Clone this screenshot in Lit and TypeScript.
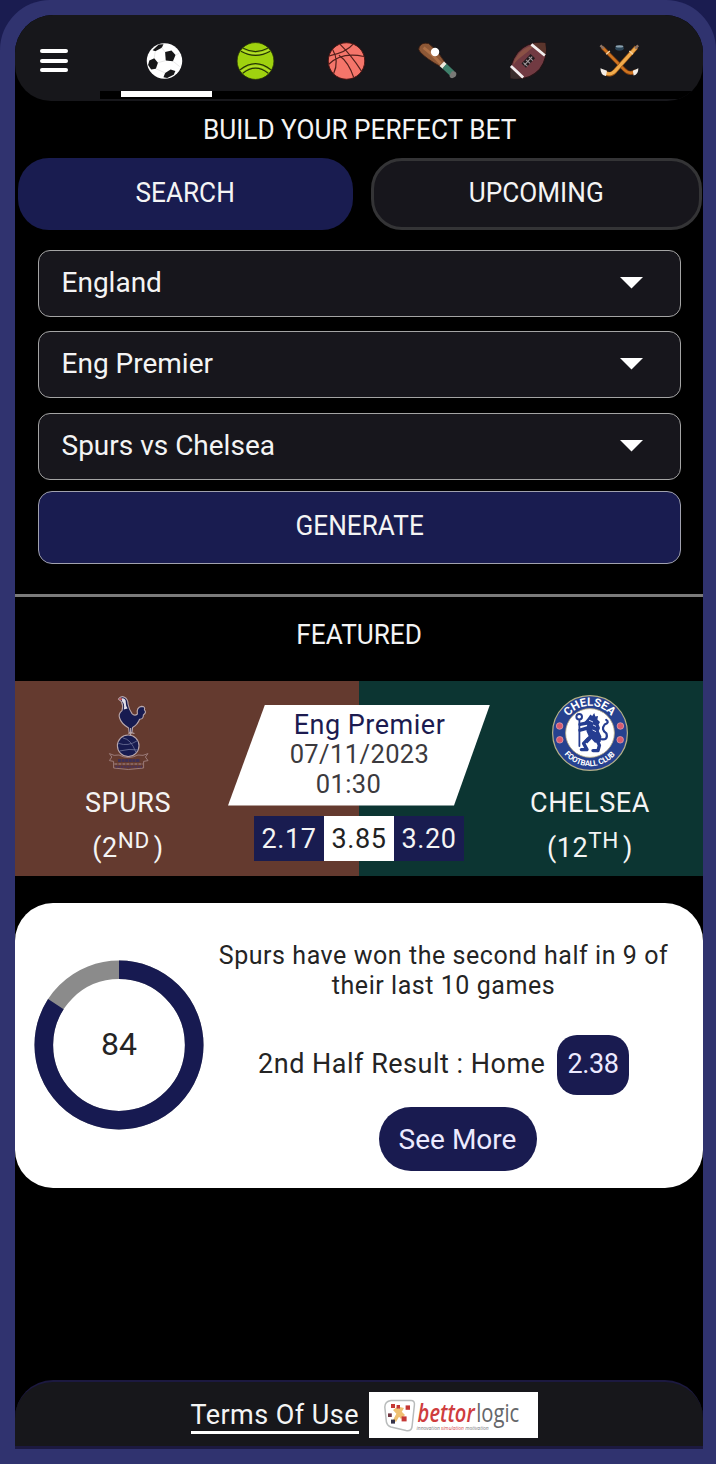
import { LitElement, html, css, svg } from "lit";
import { customElement, property } from "lit/decorators.js";

const soccer = svg`
  <circle cx="20" cy="20" r="17.3" fill="#fff"/>
  <g fill="#161618">
    <path d="M20.6 11.2 26.8 9.8 30.8 14.2 28.2 20.2 21.2 19.6Z"/>
    <path d="M5.2 19.6 10 17.2 13.6 21.6 11.6 27.6 7 28.4 4 24Z"/>
    <path d="M20.6 31.6 26 28.2 30.6 29.8 29 33.4 22.6 36.6 19 35.8Z"/>
    <path d="M8.4 9.4 14.4 4 19 3.6 17.4 7 11 10.4Z"/>
  </g>
  <g stroke="#e0e0e0" stroke-width=".7" fill="none">
    <path d="M21.2 19.6 13.6 21.6M28.2 20.2l6.6 5.2M20.6 11.2l-3.2-4.2M10 17.2l1-6.8M11.6 27.6l9 4M30.8 14.2l3.4-1.6"/>
  </g>`;

const tennis = svg`
  <circle cx="20" cy="20" r="18" fill="#9fd20f" stroke="#26300a" stroke-width=".8"/>
  <g fill="none" stroke="#243208" stroke-width="1.1">
    <path d="M5.8 10.4Q20 18.6 34.4 10.4M8 7.6Q20 14 32 7.6"/>
    <path d="M5 28.6Q20 16.6 35 28.6M7.6 32Q20 22 32.4 32"/>
  </g>
  <path d="M7 9Q20 16.4 33.2 9M6.2 30.2Q20 19.4 33.8 30.2" fill="none" stroke="#b9e038" stroke-width="1"/>`;

const basketball = svg`
  <circle cx="20" cy="20" r="17.8" fill="#f5756a" stroke="#4d1512" stroke-width=".9"/>
  <g fill="none" stroke="#54201c" stroke-width="1.2">
    <path d="M13.6 3.6Q25 15 34.6 29.8M3.2 15Q20 11.6 26.4 3.6"/>
    <path d="M2.4 23.4Q15 10.6 37 15.6M6.6 9Q13 20 7.4 32.4"/>
    <path d="M12.6 14.4Q22 21 27 36"/>
  </g>`;

const baseball = svg`
  <path d="M2.2 6.4Q4.4 1.4 11.4 3Q19.4 9 27 20.8L22.8 25.4Q9.4 18 3.2 11.4Q.8 8.8 2.2 6.4Z" fill="#8e5836" stroke="#3a1e12" stroke-width=".8"/>
  <path d="M6.4 7Q14.4 13 23 22.4" stroke="#ad6f45" stroke-width="2.8" fill="none"/>
  <path d="M26.4 20.4 29 23 25 27.6 22 24.8Z" fill="#efe9dc"/>
  <path d="M28.8 22.8 36.6 30 32.6 34.6 24.8 27.4Z" fill="#3f806b"/>
  <path d="M34.2 30Q38.4 29.4 38.4 32.8T34.2 36.8Q31 36 32 33.4Z" fill="#797976"/>
  <circle cx="17.6" cy="11.2" r="4.1" fill="#fff"/>`;

const football = svg`
  <path d="M2.6 36.8Q.8 22.6 9.4 11.6Q19.6.2 36.4 2.4Q39.4 17 30.8 28.2Q20 39.8 2.6 36.8Z" fill="#713a42" stroke="#231415" stroke-width="1"/>
  <path d="M7.6 17Q14 6 26 4.6Q22 9 14 15T5.6 24Q5 21 7.6 17Z" fill="#8a5145"/>
  <path d="M24.6 3.2Q30 1.6 36.4 2.4Q37.6 8.6 36.6 13.6Z" fill="#5a352c"/>
  <path d="M2.6 36.8Q2 31 2.6 26.4L13 36.9Q8 37.8 2.6 36.8Z" fill="#3a2d2c"/>
  <path d="M22.8 3.8 36 14.6M2.8 24.8 14.8 36" stroke="#f2eeee" stroke-width="2.7"/>
  <path d="M15.4 24.6 24.2 15.2" stroke="#211a1d" stroke-width="6"/>
  <path d="M16 24 23.6 15.8M15 21.6l4 3.6M17.6 18.8l4 3.6M20.2 16l4 3.6" stroke="#a69da0" stroke-width="1"/>`;

const hockey = svg`
  <path d="M3 6.4 25 28.6Q29.6 34.4 36 29.6" fill="none" stroke="#7d3e10" stroke-width="3.8"/>
  <path d="M4 7.4 25 28.8Q29.6 33.4 35 30.4" fill="none" stroke="#cf7420" stroke-width="2.4"/>
  <path d="M36.6 6.4 16.4 29Q11.4 36 4 30.4" fill="none" stroke="#995313" stroke-width="4.4"/>
  <path d="M36 7.2 16 29.4Q11 34.8 5 31" fill="none" stroke="#f0ab4c" stroke-width="3"/>
  <path d="M1.4 27 7.8 29.4 6.8 34.6Q1.4 33.8 1.4 27ZM38.4 27 33 29.4 33.8 34.2Q38.4 33.2 38.4 27Z" fill="#f3ede6"/>
  <path d="M1.4 4.8 4.6 8M38.2 4.8 35.2 8" stroke="#8d7364" stroke-width="2.4"/>
  <path d="M7 13.4 10.6 10.2M33.2 13.4 29.6 10.2" stroke="#f4d3a5" stroke-width="1.3"/>
  <ellipse cx="20" cy="7.6" rx="4.2" ry="2.4" fill="#2c4557"/>
  <ellipse cx="20" cy="5.8" rx="3.8" ry="1.1" fill="#8ba2b0"/>`;

const sports = [soccer, tennis, basketball, baseball, football, hockey];

const spursCrest = svg`
  <svg class="crest" viewBox="2 -1 80 80">
    <g stroke="#b9a7ab" stroke-width="1.1" stroke-linejoin="round">
      <path fill="#171b50" d="M32.4 5Q35 1.6 38.4 3.2Q42 4.8 42 10Q43 15.4 46 19.6Q48.6 22.4 51.4 20Q50.2 13.6 55.4 12.4Q59.6 12.4 58.4 15.8Q61 18.4 57.4 21Q57.4 25.4 53.6 25.2Q51.6 30.6 46.6 33.4L45.8 39H43.2L42.6 34Q35.2 29.6 33.6 24Q32 20 36 16.6Q37.6 12 35.4 7.6Z"/>
      <path d="M44.6 34V41.4M42.4 39.4Q45 38 48.4 39.4" fill="none"/>
      <circle cx="42.2" cy="51.8" r="10.8" fill="#171b50"/>
    </g>
    <path d="M32.2 5.2 35.4 3.4 36.4 6.6Z" fill="#c95a5c"/>
    <path d="M36 4.2Q40.2 4.4 39.8 8.4Q39.8 12 41.6 14.6L37.8 15.4Q39 9.8 36 7.2Z" fill="#e2dfe8"/>
    <path d="M32.6 49.4Q42 52.8 51.6 46.6M33.6 57Q43 54.4 52.4 56M37 44Q45 45 50 58.6" stroke="#6f7399" stroke-width=".8" fill="none"/>
    <g fill="none" stroke="#9b7a78" stroke-width="1">
      <path d="M23.4 59.6Q28 62.4 33 61Q42.4 66 52 61Q57 62.4 62 59.6L59.4 63 62 66.6L57.6 67.4V74Q42 77 27.6 74V67.4L23.4 66.6 25.8 63Z"/>
      <path d="M32 66.6H54" stroke="#3e3056" stroke-width="3" stroke-dasharray="3 .6"/>
      <path d="M28.4 70H57" stroke="#a98b8b" stroke-width="1.2" stroke-dasharray="3 1"/>
      <path d="M29.4 72.8H56" stroke="#4b3257" stroke-width="2" stroke-dasharray="2 .8"/>
    </g>
  </svg>`;

const chelseaCrest = svg`
  <svg class="crest" viewBox="0 0 80 80">
    <defs>
      <path id="upper" d="M14.3 47.6A26.9 26.9 0 1 1 65.7 47.6"/>
      <path id="lower" d="M7.7 47.6A33.2 33.2 0 0 0 72.3 47.6"/>
    </defs>
    <circle cx="40" cy="40" r="37.4" fill="#26418f" stroke="#b6b188" stroke-width="1.2"/>
    <circle cx="40" cy="40" r="24.4" fill="#fff" stroke="#b6a982" stroke-width=".8"/>
    <text class="badge big"><textPath href="#upper" startOffset="50%" text-anchor="middle" textLength="50">CHELSEA</textPath></text>
    <text class="badge small"><textPath href="#lower" startOffset="50%" text-anchor="middle" textLength="58">FOOTBALL CLUB</textPath></text>
    <g fill="#d65b70" stroke="#e6a5ae" stroke-width=".7">
      <circle cx="9.6" cy="33" r="3.3"/><circle cx="9.8" cy="46.8" r="3.3"/>
      <circle cx="70.4" cy="33" r="3.3"/><circle cx="70.2" cy="46.8" r="3.3"/>
    </g>
    <g stroke="#253d91" fill="none" stroke-linecap="round" stroke-linejoin="round">
      <circle cx="29.2" cy="23.8" r="2.8" stroke-width="2"/>
      <path d="M29.4 27V53" stroke-width="1.8"/>
      <path d="M37 30 30 31.4M37.4 35 30 37.2M38 46 33.6 50.4 37 56.6H31.4M47 47 49.4 52.4 48 57.6H43" stroke-width="3.4"/>
      <path d="M49.6 46Q58.8 48 56.4 40.4Q50.6 36.4 54.6 31.6Q60 29.4 56.2 26.8" stroke-width="2.2"/>
    </g>
    <path fill="#253d91" d="M38 25 40.4 21.4 42.2 23 44.2 20 45.4 23.4 48 23 47.4 26.4 50 29 48.6 31.4 50 35 48.8 38 51.4 43.6 50.6 49 45 49.8 41.6 46 37.2 50.6 34.6 47.4 38.6 43 36.4 38 37.2 31.6 34.4 29.2Z"/>
    <path d="M39 27.2 43 29M43 32l3 1.4M42.6 37l3.4 1.6" stroke="#d8def4" stroke-width="1"/>
  </svg>`;

const logo = svg`
  <svg class="logo" viewBox="0 0 169 46">
    <path d="M22 8.6H42Q46 8.6 45.4 13L43 35Q42 39.6 37 38.6L22 35Q18.4 34 17.4 30L15.8 15Q16 9.6 22 8.6Z" fill="#fff" stroke="#b9bcbc" stroke-width="1.5"/>
    <path d="M24 18l4-3 8 8-4 4ZM31 15l4 1-8 14-3-2Z" fill="#efc071"/>
    <g fill="#c43835">
      <rect x="22" y="12" width="4" height="4"/><rect x="27.6" y="13" width="3.4" height="3.6"/>
      <rect x="36.6" y="13.4" width="4.4" height="4.4"/><rect x="32.6" y="24.4" width="5" height="5"/>
    </g>
    <rect x="19" y="21.4" width="3.8" height="3.6" fill="#743742"/>
    <rect x="22" y="27.6" width="4" height="4" fill="#353348"/>
    <text class="bettor" x="48.6" y="30" textLength="57" lengthAdjust="spacingAndGlyphs">bettor</text>
    <text class="logic" x="107.2" y="30" textLength="43" lengthAdjust="spacingAndGlyphs">logic</text>
    <text class="tag" x="47.6" y="37.6" textLength="72" lengthAdjust="spacingAndGlyphs">innovation <tspan fill="#d4494b">simulation</tspan> motivation</text>
  </svg>`;

@customElement("select-box")
class SelectBox extends LitElement {
  @property() value = "";

  static styles = css`
    :host {
      display: flex;
      align-items: center;
      justify-content: space-between;
      box-sizing: border-box;
      height: 67px;
      padding: 0 37px 1px 22.5px;
      border: 1.5px solid #a4a4a4;
      border-radius: 12px;
      background: #17161c;
      color: #f4f4f4;
      font-size: 28px;
      line-height: 34px;
    }
    .arrow {
      width: 23px;
      height: 12px;
      fill: #fff;
    }
  `;

  render() {
    return html`<span>${this.value}</span>
      <svg class="arrow" viewBox="0 0 23 12"><path d="M0 0H23L11.5 11.6Z" /></svg>`;
  }
}

@customElement("app-root")
class AppRoot extends LitElement {
  static styles = css`
    :host {
      display: block;
      height: 1464px;
      background: #1a1c50;
      font-family: Roboto, "Liberation Sans", sans-serif;
      color: #f4f4f4;
    }
    * { box-sizing: border-box; }
    svg { display: block; }
    .phone {
      height: 1464px;
      padding: 15px 13px 15px 15px;
      border-radius: 50px 50px 0 0;
      background: #30336f;
    }
    .screen {
      display: flex;
      flex-direction: column;
      height: 1434px;
      border-radius: 38px 38px 0 0;
      background: #000;
    }
    .head {
      position: relative;
      display: flex;
      height: 86px;
      padding: 25px 0 0 25px;
      border-radius: 38px 38px 36px 36px;
      background: #17171b;
      overflow: hidden;
    }
    .menu {
      display: flex;
      flex-direction: column;
      gap: 5.5px;
      padding-top: 9px;
      margin-right: 54px;
    }
    .menu span {
      width: 28px;
      height: 4px;
      border-radius: 2px;
      background: #fff;
    }
    .sports { display: flex; margin-left: -1px; }
    .sport {
      display: flex;
      justify-content: center;
      width: 91px;
    }
    .sport svg { width: 41px; height: 41px; transform: translate(-2px, 0.5px); }
    .track {
      position: absolute;
      left: 85px;
      right: 0;
      bottom: 2.5px;
      height: 7.5px;
      background: #000;
    }
    .active {
      position: absolute;
      left: 106px;
      bottom: 4px;
      width: 91px;
      height: 6px;
      background: #fff;
    }
    .title {
      height: 57px;
      padding: 12px 0 0 1px;
      text-align: center;
    }
    .caps {
      display: inline-block;
      font-size: 28px;
      line-height: 34px;
      transform: scaleX(0.935);
    }
    .tabs {
      display: grid;
      grid-template-columns: 335px 331px;
      gap: 18px;
      padding: 0 1px 0 3px;
    }
    .tab {
      height: 72px;
      padding-top: 18px;
      border-radius: 31px;
      text-align: center;
    }
    .tab.on { background: #191c50; }
    .tab.off {
      padding-top: 15px;
      border: 3px solid #343436;
      background: #17161c;
    }
    .form {
      display: flex;
      flex-direction: column;
      gap: 14.5px;
      padding: 19.5px 22px 0 23px;
    }
    .generate {
      height: 73px;
      margin-top: -3.5px;
      padding-top: 17px;
      border: 1.5px solid #a0a1ae;
      border-radius: 14px;
      background: #191c50;
      text-align: center;
    }
    .featured {
      height: 87px;
      margin-top: 30px;
      padding-top: 21px;
      border-top: 3px solid #7b7b7b;
      text-align: center;
    }
    .match {
      display: grid;
      grid-template-columns: 226px 236px 226px;
      height: 195px;
      background: linear-gradient(90deg, #643a2f 344px, #0c3532 344px);
    }
    .team {
      display: flex;
      flex-direction: column;
      align-items: center;
      padding-top: 12px;
      font-size: 27px;
      line-height: 34px;
      letter-spacing: 0.6px;
    }
    .crest { width: 80px; height: 80px; }
    .name { margin-top: 13px; }
    .rank { display: flex; margin-top: 11px; }
    .rank .ord {
      margin: -8px 4px 0 0;
      font-size: 22.5px;
    }
    .badge {
      fill: #fff;
      font-family: Roboto, sans-serif;
      font-weight: 700;
    }
    .big { font-size: 11.5px; }
    .small { font-size: 7.8px; }
    .centre {
      display: flex;
      flex-direction: column;
      align-items: center;
      padding-top: 24px;
    }
    .plate {
      width: 262px;
      height: 101px;
      margin: 0 -13px;
      padding: 6px 0 0 1px;
      clip-path: polygon(37px 0, 262px 0, 226px 100%, 0 100%);
      background: #fff;
      text-align: center;
      line-height: 29.5px;
    }
    .league {
      padding-left: 20px;
      color: #1c1b50;
      font-size: 27px;
      letter-spacing: 0.5px;
    }
    .date {
      color: #3c3a3e;
      font-size: 25.5px;
      letter-spacing: 0.4px;
    }
    .time { padding-right: 22px; }
    .odds {
      display: grid;
      grid-template-columns: repeat(3, 70px);
      margin-top: 10px;
    }
    .odd {
      height: 45px;
      background: #191c50;
      font-size: 27px;
      line-height: 46px;
      letter-spacing: 0.6px;
      text-align: center;
    }
    .odd.draw { background: #fff; color: #222; }
    .card {
      display: flex;
      height: 285px;
      margin-top: 27px;
      padding: 57px 0 0 19px;
      border-radius: 38px;
      background: #fff;
      color: #242424;
    }
    .ring { flex: none; width: 170px; height: 170px; }
    .ring text { font-size: 32px; fill: #242424; text-anchor: middle; }
    .info {
      display: flex;
      flex: none;
      flex-direction: column;
      align-items: center;
      width: 479px;
      margin-top: -19px;
    }
    .fact {
      font-size: 25px;
      line-height: 30px;
      letter-spacing: 0.55px;
      text-align: center;
      white-space: nowrap;
    }
    .result {
      display: flex;
      align-items: center;
      gap: 11.5px;
      margin-top: 34px;
      font-size: 27px;
      letter-spacing: 0.5px;
      white-space: nowrap;
    }
    .result span { margin-top: -2px; }
    .price {
      width: 72px;
      height: 60px;
      border-radius: 20px;
      background: #191b50;
      color: #eceaff;
      line-height: 58px;
      letter-spacing: -0.4px;
      text-align: center;
    }
    .more {
      width: 158px;
      height: 64px;
      margin-top: 12px;
      margin-left: 28px;
      border-radius: 32px;
      background: #191b50;
      color: #eceaff;
      font-size: 28px;
      line-height: 65px;
      text-align: center;
    }
    .foot {
      display: flex;
      gap: 10px;
      height: 69px;
      margin-top: auto;
      padding: 11px 0 0 175.5px;
      border: solid #1c1940;
      border-width: 2px 0 3px;
      border-radius: 38px 38px 0 0;
      background: #17171b;
    }
    .terms {
      height: 41px;
      padding-top: 5px;
      border-bottom: 3px solid #fff;
      font-size: 27px;
      line-height: 34px;
      letter-spacing: 0.45px;
    }
    .logo { width: 169px; height: 46px; margin-top: -1px; background: #fff; }
    .bettor {
      fill: #cf3d3e;
      font: italic 600 26px "Open Sans", sans-serif;
    }
    .logic { fill: #66676a; font: 26px "Open Sans", sans-serif; }
    .tag { fill: #77777b; font: italic 6px "Open Sans", sans-serif; }
  `;

  render() {
    const circumference = 2 * Math.PI * 75.2;
    return html`<div class="phone">
      <main class="screen">
        <header class="head">
          <div class="menu"><span></span><span></span><span></span></div>
          <nav class="sports">
            ${sports.map(
              (icon) => html`<div class="sport"><svg viewBox="0 0 40 40">${icon}</svg></div>`
            )}
          </nav>
          <div class="track"></div>
          <div class="active"></div>
        </header>
        <div class="title"><span class="caps">BUILD YOUR PERFECT BET</span></div>
        <div class="tabs">
          <div class="tab on"><span class="caps">SEARCH</span></div>
          <div class="tab off"><span class="caps">UPCOMING</span></div>
        </div>
        <div class="form">
          <select-box value="England"></select-box>
          <select-box value="Eng Premier"></select-box>
          <select-box value="Spurs vs Chelsea"></select-box>
          <div class="generate"><span class="caps">GENERATE</span></div>
        </div>
        <div class="featured"><span class="caps">FEATURED</span></div>
        <section class="match">
          <div class="team">
            ${spursCrest}
            <div class="name">SPURS</div>
            <div class="rank">(2<span class="ord">ND</span>)</div>
          </div>
          <div class="centre">
            <div class="plate">
              <div class="league">Eng Premier</div>
              <div class="date">07/11/2023</div>
              <div class="date time">01:30</div>
            </div>
            <div class="odds">
              <div class="odd">2.17</div>
              <div class="odd draw">3.85</div>
              <div class="odd">3.20</div>
            </div>
          </div>
          <div class="team">
            ${chelseaCrest}
            <div class="name">CHELSEA</div>
            <div class="rank">(12<span class="ord">TH</span>)</div>
          </div>
        </section>
        <section class="card">
          <svg class="ring" viewBox="0 0 170 170">
            <circle cx="85" cy="85" r="75.2" fill="none" stroke="#8b8b8b" stroke-width="18.6" />
            <circle cx="85" cy="85" r="75.2" fill="none" stroke="#171a51" stroke-width="18.6"
              stroke-dasharray="${circumference * 0.84} ${circumference}" transform="rotate(-90 85 85)" />
            <text x="85" y="94.5">84</text>
          </svg>
          <div class="info">
            <div class="fact">Spurs have won the second half in 9 of<br />their last 10 games</div>
            <div class="result">
              <span>2nd Half Result : Home</span>
              <div class="price">2.38</div>
            </div>
            <div class="more">See More</div>
          </div>
        </section>
        <footer class="foot">
          <div class="terms">Terms Of Use</div>
          ${logo}
        </footer>
      </main>
    </div>`;
  }
}
